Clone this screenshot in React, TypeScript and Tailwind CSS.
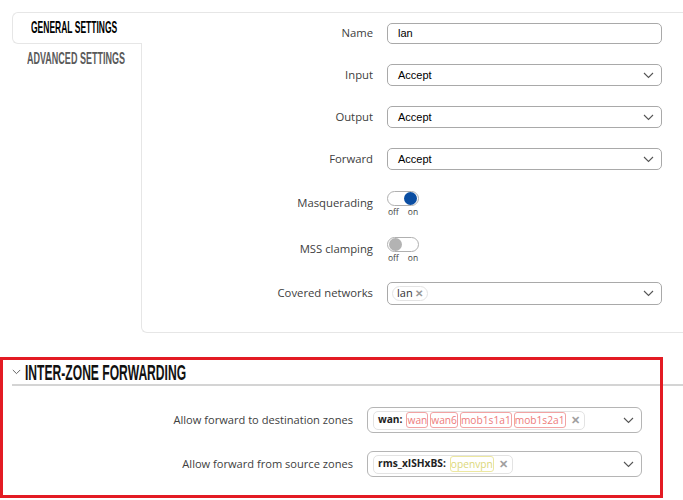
import React from 'react'

const cond = { fontFamily: '"Liberation Sans", Arial, sans-serif' }
const open = { fontFamily: '"Open Sans", "Noto Sans", sans-serif' }
const arial = { fontFamily: '"Liberation Sans", Arial, sans-serif' }

function Chevron({ w = 11, h = 7 }: { w?: number; h?: number }) {
  return (
    <svg width={w} height={h} viewBox="0 0 11 7">
      <path d="M1 1 L5.5 5.5 L10 1" fill="none" stroke="#555" strokeWidth="1.1" />
    </svg>
  )
}

// condensed heading text: squeezed sideways to get the narrow display face
function Narrow({ children, className = '' }: { children: React.ReactNode; className?: string }) {
  return (
    <span className={`inline-block whitespace-nowrap origin-left font-bold ${className}`} style={cond}>
      {children}
    </span>
  )
}

function Row({ label, children }: { label: string; children: React.ReactNode }) {
  return (
    <div className="flex items-center">
      <div className="w-[245px] shrink-0 text-right text-[11.3px] text-[#404040] pr-[14px]" style={open}>{label}</div>
      {children}
    </div>
  )
}

function TextInput({ value }: { value: string }) {
  return (
    <div className="w-[275px] h-[21px] rounded-[5px] border border-[#a9a9a9] flex items-center px-[10px] text-[11px] text-black" style={arial}>
      {value}
    </div>
  )
}

function Select({ value }: { value: string }) {
  return (
    <div className="w-[275px] h-[22px] rounded-[5px] border border-[#a9a9a9] flex items-center justify-between pl-[10px] pr-[7px] text-[11px] text-black" style={arial}>
      <span>{value}</span>
      <Chevron />
    </div>
  )
}

function Toggle({ on }: { on: boolean }) {
  return (
    <div className="flex flex-col h-[26px] pt-[1px]">
      <div className={`w-[32px] h-[15px] rounded-full border border-[#b0b0b0] bg-white flex items-center px-[1px] ${on ? 'justify-end' : 'justify-start'}`}>
        <div className={`w-[13px] h-[13px] rounded-full ${on ? 'bg-[#0b4ea2]' : 'bg-[#b3b3b3]'}`} />
      </div>
      <div className="flex gap-[9px] pl-[1px] pt-[1px] text-[8.5px] leading-[10px] text-[#444]" style={open}>
        <span>off</span>
        <span>on</span>
      </div>
    </div>
  )
}

function Tag({ text, tone }: { text: string; tone: 'red' | 'yellow' }) {
  const cls = tone === 'red'
    ? 'border-[#f2a3a3] text-[#ee7b7b]'
    : 'border-[#ece7a0] text-[#dcd77a]'
  return (
    <span className={`border rounded-[3px] leading-[14px] ${cls}`}>{text}</span>
  )
}

function ZoneSelect({ zone, tags, tone }: { zone: string; tags: string[]; tone: 'red' | 'yellow' }) {
  return (
    <div className="w-[275px] h-[26px] rounded-[6px] border border-[#b5b5b5] flex items-center justify-between pl-[5px] pr-[7px]" style={open}>
      <div className="flex items-center gap-[2px] h-[19px] border border-[#e3e3e3] rounded-[5px] pl-[4px] pr-[4px] text-[10.2px]">
        <span className="font-bold text-[#222] mr-[2px]">{zone}</span>
        {tags.map(t => <Tag key={t} text={t} tone={tone} />)}
        <span className="text-[#a0a0a0] font-bold text-[11px] ml-[3px]">✕</span>
      </div>
      <Chevron />
    </div>
  )
}

export default function App() {
  return (
    <div className="relative w-[683px] h-[500px] overflow-hidden bg-white">
      <div className="flex pt-[12px]">
        <div className="w-[129px] ml-[12px] shrink-0">
          <div className="relative z-10 -mr-px h-[32px] bg-white border border-r-0 border-[#e6e6e6] rounded-l-[6px] flex items-center pl-[18px]">
            <Narrow className="text-[17px] text-black scale-x-[0.5]">GENERAL SETTINGS</Narrow>
          </div>
          <div className="h-[30px] flex items-center pl-[15px]">
            <Narrow className="text-[17px] text-[#5a5a5a] scale-x-[0.53]">ADVANCED SETTINGS</Narrow>
          </div>
        </div>
        <div className="flex-1 border-t border-l border-b border-[#e6e6e6] rounded-bl-[6px] pt-[10px] pb-[27px] flex flex-col gap-[20px]">
          <Row label="Name"><TextInput value="lan" /></Row>
          <Row label="Input"><Select value="Accept" /></Row>
          <Row label="Output"><Select value="Accept" /></Row>
          <Row label="Forward"><Select value="Accept" /></Row>
          <Row label="Masquerading"><Toggle on /></Row>
          <Row label="MSS clamping"><Toggle on={false} /></Row>
          <Row label="Covered networks">
            <div className="w-[275px] h-[23px] rounded-[5px] border border-[#a9a9a9] flex items-center justify-between pl-[4px] pr-[7px]">
              <span className="flex items-center gap-[2px] h-[15px] border border-[#e3e3e3] rounded-full px-[4px] text-[11px] text-[#333]" style={open}>
                lan <span className="text-[#999] font-bold text-[10px]">✕</span>
              </span>
              <Chevron />
            </div>
          </Row>
        </div>
      </div>

      <div className="mt-[27px] ml-[12px]">
        <div className="h-[26px] flex items-center gap-[4px] border-b-2 border-[#d4d4d4]">
          <Chevron w={9} h={6} />
          <Narrow className="text-[22px] text-[#111] scale-x-[0.55]">INTER-ZONE FORWARDING</Narrow>
        </div>
        <div className="pt-[21px] flex flex-col gap-[18px]">
          <div className="flex items-center">
            <div className="w-[355px] shrink-0 text-right pr-[14px] text-[11.1px] text-[#404040]" style={open}>Allow forward to destination zones</div>
            <ZoneSelect zone="wan:" tags={['wan', 'wan6', 'mob1s1a1', 'mob1s2a1']} tone="red" />
          </div>
          <div className="flex items-center">
            <div className="w-[355px] shrink-0 text-right pr-[14px] text-[11.1px] text-[#404040]" style={open}>Allow forward from source zones</div>
            <ZoneSelect zone="rms_xISHxBS:" tags={['openvpn']} tone="yellow" />
          </div>
        </div>
      </div>

      <div className="absolute left-0 top-[357px] w-[663px] h-[141px] border-[3px] border-[#e31b23] pointer-events-none" />
    </div>
  )
}
